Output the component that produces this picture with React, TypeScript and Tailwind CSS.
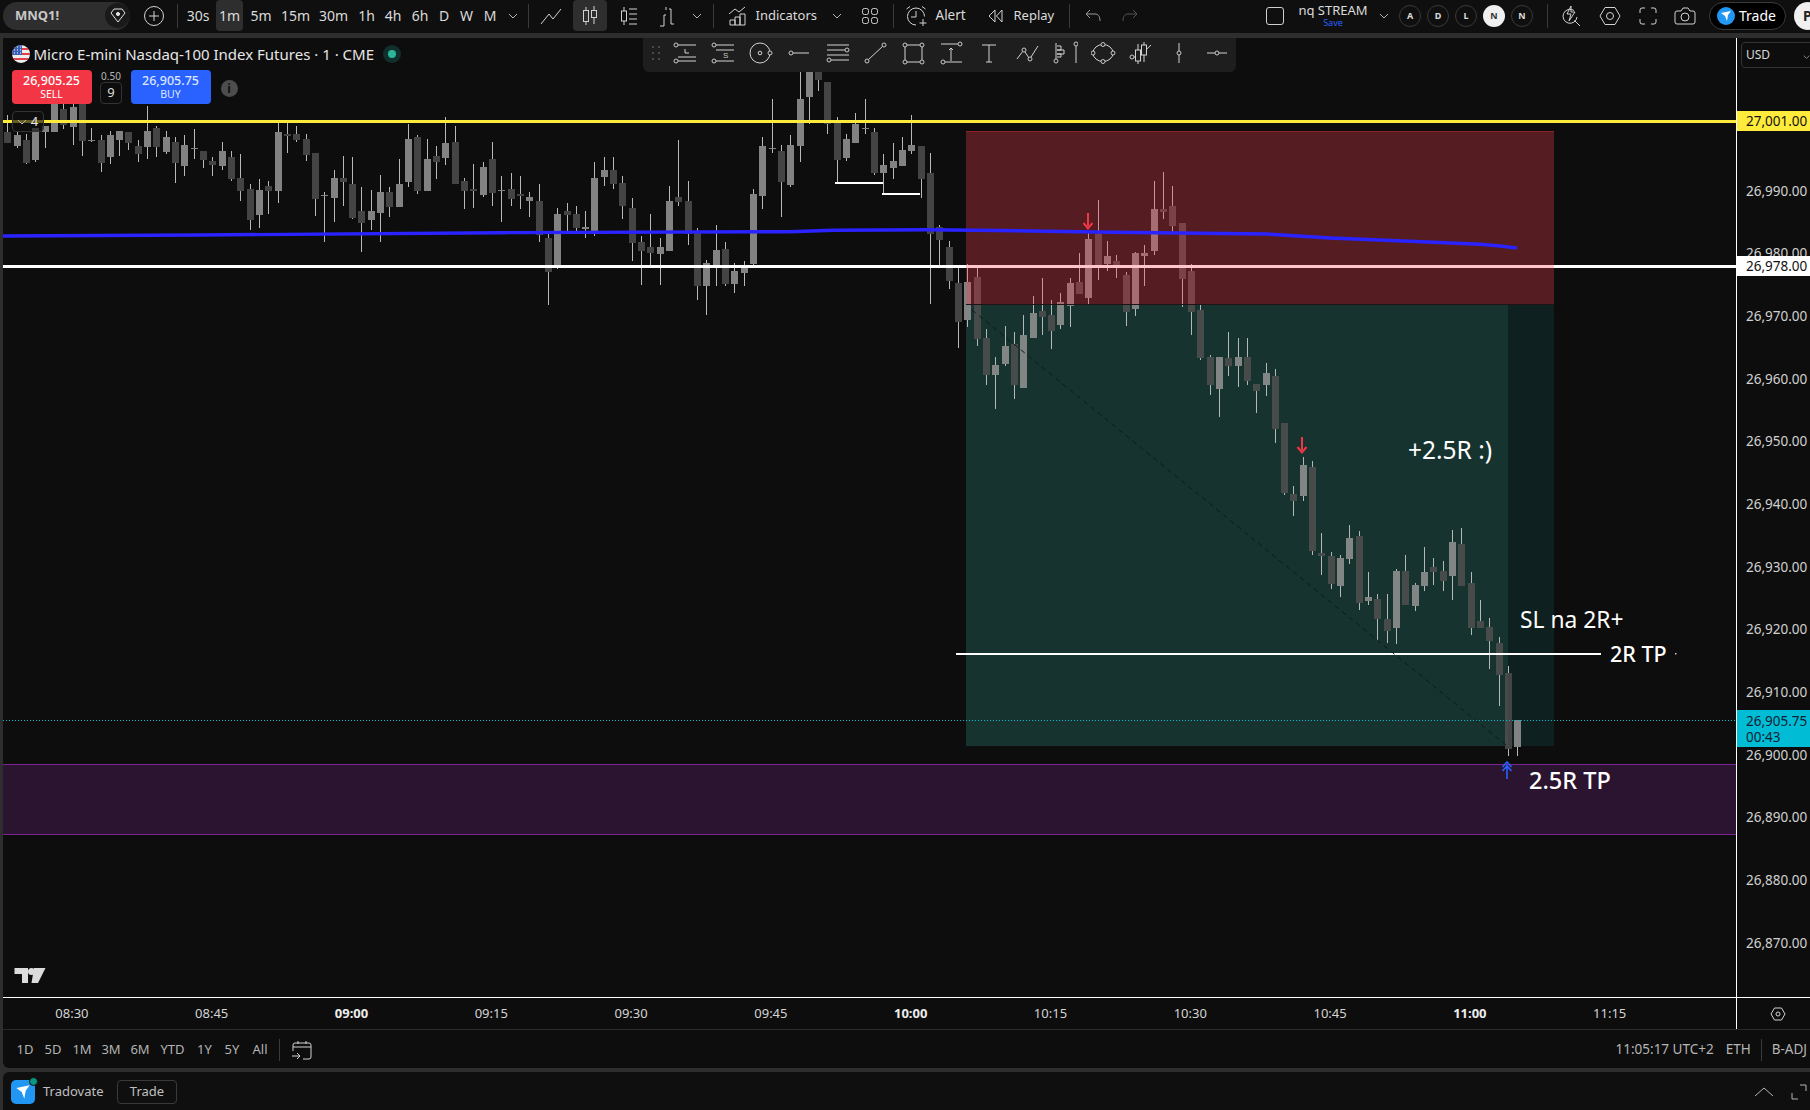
import React from "react";

type C = [number, number, number, number, number];
// wickTop, bodyTop, bodyBottom, wickBottom, light – read in 3x pixels from a base y
const S1: C[] = [[45,96,129,129,0],[96,105,138,144,1],[102,120,189,192,0],[84,84,180,186,1],[78,78,96,144,1],[-24,-24,96,96,1],[-30,27,75,87,0],[-15,21,81,135,1],[-24,-24,123,168,0],[84,120,123,126,1],[105,120,189,216,0],[93,105,171,192,1],[93,93,120,168,1],[96,96,129,150,0],[120,138,162,186,0],[18,93,141,177,1],[78,84,141,171,0],[93,111,156,162,1],[111,126,189,249,0],[105,135,198,228,1],[87,144,147,177,1],[153,153,180,204,0],[171,183,195,228,0],[126,153,198,210,1],[153,171,237,243,0],[162,234,273,303,0],[252,267,360,390,0],[237,270,345,384,1],[243,258,273,342,0],[63,96,273,309,1],[69,102,108,159,0],[78,102,120,126,0],[102,117,165,183,0],[159,159,297,348,0],[276,285,288,426,1],[210,234,294,366,1],[168,234,246,318,0],[171,252,354,357,0],[261,333,369,456,0],[270,333,360,390,1],[225,276,339,426,1],[261,276,321,351,0],[177,252,321,321,1],[72,117,246,261,1],[105,111,273,282,0],[117,177,273,273,1],[138,168,186,237,0],[51,129,174,195,1],[78,126,252,252,0],[234,243,273,327,0],[192,267,273,324,0],[186,201,285,291,1],[126,177,279,318,0]];
const S2: C[] = [[348,389,392,486,1],[339,387,417,438,0],[348,402,408,447,0],[396,411,423,471,1],[372,423,525,546,0],[513,534,636,735,0],[444,462,621,627,1],[429,453,465,519,0],[438,462,504,519,0],[453,501,507,534,1],[306,354,516,528,1],[291,330,351,378,1],[291,330,372,387,0],[348,369,438,477,0],[414,444,549,603,0],[528,546,573,675,0],[462,561,579,618,0],[534,561,582,675,1],[378,423,573,573,1],[240,411,426,438,0],[363,423,522,555,0],[504,513,678,720,0],[600,609,678,765,1],[495,570,615,678,1],[546,567,672,678,0],[609,633,672,699,1],[603,621,639,678,1],[387,402,612,618,1],[231,258,408,447,1],[117,264,267,279,1],[255,273,366,471,0],[225,255,375,381,1],[-20,117,258,306,1],[-20,-20,111,192,1],[-20,36,60,93,0],[66,66,192,222,0],[171,183,300,369,0],[222,237,294,303,1],[159,192,249,249,1],[117,204,207,222,1],[204,216,339,345,0],[282,315,339,402,1],[249,303,324,357,1],[231,270,318,318,1],[165,255,273,282,1],[258,258,357,414,0],[279,339,522,732,0],[495,501,540,618,0],[543,561,663,687,0],[618,669,786,864,0],[612,666,780,801,1],[624,651,837,858,0]];
const S3: C[] = [[597,624,735,765,0],[681,705,735,837,1],[588,648,702,708,1],[606,642,765,807,0],[555,615,774,774,1],[498,549,624,624,1],[444,543,561,615,0],[510,555,603,657,0],[489,516,585,597,1],[444,459,528,591,1],[369,456,492,492,0],[309,327,504,525,1],[210,312,414,450,0],[333,378,402,423,1],[375,393,405,444,0],[426,435,546,588,0],[366,369,537,558,1],[345,369,378,468,1],[153,237,363,375,1],[126,237,246,267,0],[168,228,288,309,0],[279,279,447,531,0],[402,423,546,615,0],[525,540,684,690,0],[675,681,765,795,0],[681,681,777,861,1],[606,684,708,738,0],[624,681,708,771,1],[624,681,753,765,0],[762,762,783,849,0],[699,729,765,798,1],[717,738,897,939,0]];
const S4: C[] = [[-21,-21,189,195,0],[168,192,213,258,0],[81,105,198,213,1],[93,111,363,375,0],[309,369,378,435,0],[366,378,462,477,0],[375,384,468,501,1],[285,324,387,402,1],[303,318,519,540,0],[426,501,513,525,1],[492,507,567,633,0],[492,567,603,639,0],[417,423,594,642,1],[375,423,525,525,0],[459,465,528,543,1],[351,426,468,483,1],[384,411,426,465,0],[393,423,453,483,0],[300,336,438,510,1],[294,342,468,468,0],[426,459,594,615,0],[510,573,594,594,0],[564,591,633,717,0],[621,639,735,828,0],[708,729,957,978,0],[870,870,951,978,1]];

const candles = [
  ...S1.map((c) => ({ c, b: 100 })),
  ...S2.map((c) => ({ c, b: 60 })),
  ...S3.map((c) => ({ c, b: 130 })),
  ...S4.map((c) => ({ c, b: 430 })),
];

function Candles() {
  return (
    <g shapeRendering="crispEdges">
      {candles.map(({ c, b }, i) => {
        const x = Math.round(7.33 + i * 9.32);
        const y = (v: number) => b + v / 3;
        return (
          <g key={i}>
            <rect x={x} y={y(c[0])} width={1} height={(c[3] - c[0]) / 3} fill="#b8b8b8" />
            <rect x={x - 3} y={y(c[1])} width={7} height={Math.max(1, (c[2] - c[1]) / 3)} fill={c[4] ? "#828282" : "#444444"} />
          </g>
        );
      })}
    </g>
  );
}

function Ic({ w = 24, h = 24, children, className }: { w?: number; h?: number; children: React.ReactNode; className?: string }) {
  return (
    <svg width={w} height={h} viewBox={`0 0 ${w} ${h}`} fill="none" stroke="#d2d2d2" strokeWidth={1} className={className}>
      {children}
    </svg>
  );
}

const Dot = ({ x, y }: { x: number; y: number }) => <circle cx={x} cy={y} r={2} fill="#1e1e1e" stroke="#c8c8c8" />;

const tools: React.ReactNode[] = [
  <><Dot x={3} y={4} /><path d="M5 4H23M5 20H23M5 16H23" /><path d="M12 8V12H16" /><Dot x={3} y={20} /></>,
  <><Dot x={3} y={4} /><path d="M5 4H23M5 9H23M5 20H23" /><text x={12} y={17} fontSize={8} fill="#c8c8c8" stroke="none" fontFamily="'Liberation Sans'">S</text><Dot x={3} y={20} /></>,
  <><circle cx={11} cy={12} r={10} /><circle cx={11} cy={12} r={1.8} /><Dot x={21} y={12} /></>,
  <><Dot x={4} y={12} /><path d="M6 12H22" /></>,
  <><path d="M2 4H24M2 9H20M2 14H24M6 19H24" /><Dot x={22} y={9} /><Dot x={4} y={19} /></>,
  <><Dot x={4} y={20} /><Dot x={21} y={4} /><path d="M5.5 18.5L19.5 5.5" /></>,
  <><path d="M4 6V19M6 4H19M21 6V19M6 21H19" /><Dot x={4} y={4} /><Dot x={21} y={4} /><Dot x={4} y={21} /><Dot x={21} y={21} /></>,
  <><path d="M2 3H19M6 21H23M12 7V20M10 9L12 7L14 9" /><Dot x={21} y={3} /><Dot x={4} y={21} /></>,
  <path d="M5 4H19M12 4V21M9 21H15" />,
  <><path d="M2 18L8 10M10 11L14 17M16 16L23 5" /><Dot x={9} y={9} /><Dot x={15} y={18} /></>,
  <><path d="M3 2V18M4 5H8V9H4M4 9H11V13H4M4 13H8V16H4M23 5V22" /><Dot x={3} y={20} /><Dot x={23} y={3} /></>,
  <><ellipse cx={12} cy={12} rx={10} ry={8.5} /><Dot x={12} y={3.5} /><Dot x={2} y={12} /><Dot x={22} y={12} /><Dot x={12} y={20.5} /></>,
  <><path d="M9 3V23M15 1V21M2 17C8 16 14 12 22 4" /><rect x={6.5} y={9} width={5} height={11} fill="#1e1e1e" /><rect x={12.5} y={4} width={5} height={10} fill="#1e1e1e" /><Dot x={3} y={16} /></>,
  <><path d="M12 2V22" /><Dot x={12} y={12} /></>,
  <><path d="M2 12H22" /><Dot x={12} y={12} /></>,
];

const sep = "w-px h-[24px] bg-[#3a3a3a] shrink-0";
const tfBtn = "flex items-center justify-center shrink-0 h-full";

function Chevron({ className }: { className?: string }) {
  return <svg width="10" height="6" viewBox="0 0 10 6" fill="none" stroke="#b5b5b5" className={className}><path d="M1 1L5 5L9 1" /></svg>;
}

function Header() {
  return (
    <div className="h-[33px] shrink-0 bg-[#0f0f0f] flex items-center text-[14px] text-[#dbdbdb] overflow-hidden pb-[2px]">
      <div className="ml-[3px] w-[127px] h-[28px] shrink-0 rounded-full bg-[#2e2e2e] flex items-center justify-between">
        <span className="ml-[12px] font-bold text-[13px] text-[#c8c8c8]">MNQ1!</span>
        <span className="w-[25px] h-[25px] rounded-full bg-[#1a1a1a] flex items-center justify-center">
          <svg width="16" height="15" viewBox="0 0 16 15" fill="none" stroke="#e0e0e0"><path d="M4 1H12L15 5L8 14L1 5Z" /><circle cx="8" cy="6" r="1.6" fill="#e0e0e0" /></svg>
        </span>
      </div>
      <div className="ml-[9.5px] w-[28px] flex justify-center shrink-0">
        <Ic w={20} h={20}><circle cx={10} cy={10} r={9.5} /><path d="M10 5V15M5 10H15" /></Ic>
      </div>
      <div className={`ml-[9px] ${sep}`} />
      <div className="ml-[2.5px] flex h-full items-center shrink-0 text-[14px]">
        <div className={`w-[36px] ${tfBtn}`}>30s</div>
        <div className={`w-[27px] ${tfBtn} bg-[#2e2e2e] rounded-[4px] h-[32px]`}>1m</div>
        <div className={`w-[36px] ${tfBtn}`}>5m</div>
        <div className={`w-[33px] ${tfBtn}`}>15m</div>
        <div className={`w-[43px] ${tfBtn}`}>30m</div>
        <div className={`w-[23px] ${tfBtn}`}>1h</div>
        <div className={`w-[30px] ${tfBtn}`}>4h</div>
        <div className={`w-[24px] ${tfBtn}`}>6h</div>
        <div className={`w-[24px] ${tfBtn}`}>D</div>
        <div className={`w-[21px] ${tfBtn}`}>W</div>
        <div className={`w-[26px] ${tfBtn}`}>M</div>
        <div className={`w-[19px] ${tfBtn}`}><Chevron /></div>
      </div>
      <div className={`ml-[6px] ${sep}`} />
      <div className={`w-[44px] ${tfBtn}`}>
        <Ic w={22} h={18}><path d="M1 17L9 7L13 12L21 2" /></Ic>
      </div>
      <div className={`w-[34px] h-[32px] ${tfBtn} bg-[#2e2e2e] rounded-[4px]`}>
        <Ic w={20} h={22}><path d="M6 2V20M14 1V19" /><rect x={3.5} y={5.5} width={5} height={11} fill="#2e2e2e" /><rect x={11.5} y={5.5} width={5} height={7} fill="#2e2e2e" /></Ic>
      </div>
      <div className={`w-[43px] ${tfBtn}`}>
        <Ic w={20} h={22}><path d="M5 2V20" /><rect x={2.5} y={6} width={5} height={10} fill="#0f0f0f" /><path d="M10 4H18M10 9H18M10 14H18M10 19H18" /></Ic>
      </div>
      <div className={`w-[34px] ${tfBtn}`}>
        <Ic w={20} h={22}><path d="M3 21H7V10H9M9 5V2M14 19V4H12M14 19H17" /></Ic>
      </div>
      <div className={`w-[26px] ${tfBtn}`}><Chevron /></div>
      <div className={`ml-[3px] ${sep}`} />
      <div className="ml-[12.5px] w-[22px] shrink-0 flex justify-center">
        <Ic w={20} h={20}><path d="M1 8L7 3L11 6L17 1" /><path d="M2 19V14H7V19ZM7 19V11H12V19ZM12 19V8H17V19Z" /></Ic>
      </div>
      <div className="ml-[7px] w-[62px] shrink-0 text-[13px] whitespace-nowrap">Indicators</div>
      <Chevron className="ml-[14px] w-[10px] shrink-0 mr-[5px]" />
      <div className="w-[46.5px] shrink-0 flex justify-center">
        <Ic w={18} h={18}><rect x={1.5} y={1.5} width={6} height={6} rx={2} /><rect x={10.5} y={1.5} width={6} height={6} rx={2} /><rect x={1.5} y={10.5} width={6} height={6} rx={2} /><rect x={10.5} y={10.5} width={6} height={6} rx={2} /></Ic>
      </div>
      <div className={sep} />
      <div className="ml-[11px] w-[22px] shrink-0 flex justify-center">
        <Ic w={22} h={22}><path d="M11 20A8.5 8.5 0 1 1 19.5 11.5M1.5 4L5 1.5M17 1.5L20.5 4M11 6V12H6M18 14V21M14.5 18H21.5" /></Ic>
      </div>
      <div className="ml-[8.5px] w-[31px] shrink-0 text-[13.5px]">Alert</div>
      <div className="ml-[19px] w-[20px] shrink-0 flex justify-center">
        <Ic w={16} h={14}><path d="M7 1L1 7L7 13ZM14 1L8.5 7L14 13Z" /></Ic>
      </div>
      <div className="ml-[8px] w-[42px] shrink-0 text-[13px]">Replay</div>
      <div className={`ml-[13px] ${sep}`} />
      <div className="ml-[13px] w-[20px] shrink-0 flex justify-center">
        <Ic w={16} h={14}><path d="M5 1L1 5L5 9M1 5H10C13 5 15 7 15 12" stroke="#9a9a9a" /></Ic>
      </div>
      <div className="ml-[17.5px] w-[20px] shrink-0 flex justify-center">
        <Ic w={16} h={14}><path d="M11 1L15 5L11 9M15 5H6C3 5 1 7 1 12" stroke="#555" /></Ic>
      </div>

      <div className="ml-auto flex items-center shrink-0 w-[544.5px]">
        <div className="w-[18.5px] h-[18px] border border-[#cfcfcf] rounded-[3px] shrink-0" />
        <div className="ml-[14px] w-[70px] shrink-0 flex flex-col items-center leading-none">
          <span className="text-[13px] whitespace-nowrap leading-[14px]">nq STREAM</span>
          <span className="text-[9px] text-[#2962ff] leading-[11px]">Save</span>
        </div>
        <Chevron className="ml-[11px] shrink-0 mr-[1px]" />
        <div className="ml-[9px] w-[22px] h-[22px] rounded-full border border-[#3a3a3a] text-[9px] font-bold flex items-center justify-center shrink-0">A</div>
        <div className="ml-[6px] w-[22px] h-[22px] rounded-full border border-[#3a3a3a] text-[9px] font-bold flex items-center justify-center shrink-0">D</div>
        <div className="ml-[6px] w-[22px] h-[22px] rounded-full border border-[#3a3a3a] text-[9px] font-bold flex items-center justify-center shrink-0">L</div>
        <div className="ml-[6px] w-[22px] h-[22px] rounded-full bg-[#f0f0f0] text-[#333] text-[9px] font-bold flex items-center justify-center shrink-0">N</div>
        <div className="ml-[6px] w-[22px] h-[22px] rounded-full border border-[#3a3a3a] text-[9px] font-bold flex items-center justify-center shrink-0">N</div>
        <div className={`ml-[14px] ${sep}`} />
        <div className="ml-[12px] w-[22px] flex justify-center shrink-0">
          <Ic w={22} h={22}><path d="M14 5.5A7 7 0 1 0 17 12M14.5 15.5L20 21M11 1L7 9H11L9 16L15 7H11Z" /></Ic>
        </div>
        <div className="ml-[17px] w-[22px] flex justify-center shrink-0">
          <Ic w={22} h={22}><path d="M6 2.5H16L21 11L16 19.5H6L1 11Z" /><circle cx={11} cy={11} r={3.5} /></Ic>
        </div>
        <div className="ml-[16px] w-[22px] flex justify-center shrink-0">
          <Ic w={18} h={18}><path d="M1 6V3A2 2 0 0 1 3 1H6M12 1H15A2 2 0 0 1 17 3V6M17 12V15A2 2 0 0 1 15 17H12M6 17H3A2 2 0 0 1 1 15V12" /></Ic>
        </div>
        <div className="ml-[15px] w-[22px] flex justify-center shrink-0">
          <Ic w={22} h={18}><path d="M3 4H7L9 1H14L16 4H19A2 2 0 0 1 21 6V15A2 2 0 0 1 19 17H3A2 2 0 0 1 1 15V6A2 2 0 0 1 3 4Z" /><circle cx={11} cy={10} r={4} /></Ic>
        </div>
        <div className="ml-[13px] w-[77px] h-[28px] rounded-full bg-black border border-[#3a3a3a] flex items-center shrink-0">
          <span className="ml-[7px] w-[18px] h-[18px] rounded-full bg-[#2196f3] flex items-center justify-center">
            <svg width="12" height="12" viewBox="0 0 12 12" fill="#fff"><path d="M1 3L11 1L8 5L7 11L5 6Z" /></svg>
          </span>
          <span className="ml-[4px] text-[14px] text-white">Trade</span>
        </div>
        <div className="ml-[8px] w-[28px] h-[28px] rounded-full bg-[#f0f0f0] text-[#222] text-[14px] font-bold flex items-center pl-[9px] shrink-0">P</div>
      </div>
    </div>
  );
}

function Toolbar() {
  return (
    <div className="absolute left-[639.5px] top-[-4.5px] w-[593px] h-[38px] rounded-[6px] bg-[#1e1e1e] flex items-center">
      <div className="ml-[9px] w-[8px] shrink-0 grid grid-cols-2 gap-x-[4px] gap-y-[4px]">
        {[0, 1, 2, 3, 4, 5].map((i) => <span key={i} className="w-[2px] h-[2px] bg-[#4a4a4a]" />)}
      </div>
      <div className="ml-[7px] flex items-center">
        {tools.map((t, i) => (
          <div key={i} className="w-[38px] flex justify-center shrink-0"><Ic w={25} h={24}>{t}</Ic></div>
        ))}
      </div>
    </div>
  );
}

function Legend() {
  return (
    <div className="absolute left-[8.5px] top-[5px] flex flex-col items-start">
      <div className="flex items-center h-[22px]">
        <svg width="18" height="18" viewBox="0 0 18 18" className="shrink-0">
          <defs><clipPath id="fl"><circle cx="9" cy="9" r="9" /></clipPath></defs>
          <g clipPath="url(#fl)">
            <rect width="18" height="18" fill="#eee" />
            <path d="M0 4H18M0 9H18M0 14H18" stroke="#e0404a" strokeWidth="2.2" />
            <rect width="10" height="10" fill="#3b5fb5" />
            <path d="M2 2H3M5 2H6M8 2H9M2 5H3M5 5H6M8 5H9M2 8H3M5 8H6M8 8H9" stroke="#fff" />
          </g>
        </svg>
        <span className="ml-[4px] text-[15px] text-[#e6e6e6] whitespace-nowrap">Micro E-mini Nasdaq-100 Index Futures · 1 · CME</span>
        <span className="ml-[9px] w-[18px] h-[18px] rounded-full bg-[#11302b] flex items-center justify-center">
          <span className="w-[8px] h-[8px] rounded-full bg-[#2bb79a]" />
        </span>
      </div>
      <div className="mt-[5px] flex items-end h-[34px]">
        <div className="w-[80px] h-[34px] rounded-[4px] bg-[#f23645] text-white flex flex-col items-center justify-center leading-none">
          <span className="text-[12.5px] font-medium leading-[15px]">26,905.25</span>
          <span className="text-[10.5px] leading-[13px]">SELL</span>
        </div>
        <div className="ml-[8.5px] w-[22px] flex flex-col items-center">
          <span className="text-[10px] text-[#b5b5b5] leading-[12px]">0.50</span>
          <span className="w-[22px] h-[22px] rounded-[4px] border border-[#333] text-[13px] text-[#dbdbdb] flex items-center justify-center">9</span>
        </div>
        <div className="ml-[8.5px] w-[80px] h-[34px] rounded-[4px] bg-[#2962ff] text-[#dce6ff] flex flex-col items-center justify-center leading-none">
          <span className="text-[12.5px] font-medium leading-[15px]">26,905.75</span>
          <span className="text-[10.5px] leading-[13px]">BUY</span>
        </div>
        <div className="ml-[10px] mb-[7px] w-[17px] h-[17px] rounded-full bg-[#4d4d4d] text-[#111] text-[12px] font-bold flex items-center justify-center">i</div>
      </div>
      <div className="mt-[7px] w-[32px] h-[21px] rounded-[4px] border border-[#333] bg-[rgba(15,15,15,0.65)] flex items-center justify-center gap-[4px] text-[13px] text-[#e6e6e6]">
        <Chevron />
        <span>4</span>
      </div>
    </div>
  );
}

function ChartSvg() {
  const blue = "3,236 200,235 500,232.7 790,231.7 833,230.3 927,229.7 1000,230.5 1094,232 1266,234 1330,238 1404,241 1480,244.3 1500,246 1517,248";
  return (
    <svg className="absolute inset-0 w-full h-full" viewBox="3 38 1733 959" preserveAspectRatio="none">
      <g shapeRendering="crispEdges">
        <rect x={966} y={305} width={588} height={441} fill="rgb(33,203,193)" fillOpacity={0.1} />
        <rect x={966} y={305} width={542} height={441} fill="rgb(49,165,153)" fillOpacity={0.08} />
      </g>
      <Candles />
      <g shapeRendering="crispEdges">
        <rect x={966} y={305} width={542} height={441} fill="rgb(120,200,190)" fillOpacity={0.06} />
        <rect x={3} y={120} width={1733} height={3} fill="#ffeb3b" />
        <rect x={3} y={265} width={1733} height={3} fill="#ffffff" />
        <rect x={835} y={182} width={48} height={2} fill="#fff" />
        <rect x={882} y={193} width={38} height={2} fill="#fff" />
        <rect x={966} y={131} width={588} height={173} fill="rgb(253,66,83)" fillOpacity={0.3} />
        <rect x={966} y={131} width={588} height={1} fill="#8c2026" />
        <rect x={966} y={304} width={588} height={1} fill="#1e1416" />
        <rect x={3} y={764} width={1733} height={70} fill="#2a1430" />
        <rect x={3} y={764} width={1733} height={1} fill="#7b2296" />
        <rect x={3} y={834} width={1733} height={1} fill="#7b2296" />
        <rect x={956} y={653} width={645} height={2} fill="#fff" />
      </g>
      <path d="M972 310L1506 745" stroke="#0d1b1a" strokeWidth={1} strokeDasharray="5 4" />
      <path d="M3 720.5H1736" stroke="#00bcd4" strokeWidth={1} strokeDasharray="1 2" />
      <polyline points={blue} fill="none" stroke="#2a22ff" strokeWidth={3.4} />
      <path d="M1088 213V226M1083.5 223L1088 228.5L1092.5 223" fill="none" stroke="#f23645" strokeWidth={2} />
      <path d="M1302 437V450M1297.5 447L1302 452.5L1306.5 447" fill="none" stroke="#f23645" strokeWidth={2} />
      <path d="M1507 765V779M1502.5 767L1507 762L1511.5 767M1502.5 771L1507 766L1511.5 771" fill="none" stroke="#2962ff" strokeWidth={1.6} />
      <rect x={1675} y={653} width={1.5} height={1.5} fill="#ccc" />
      <path d="M14.5 968H28V983H22V974H14.5ZM34 968H45.5L38 983H31.5Z" fill="#dcdcdc" />
      <circle cx={31.5} cy={971.5} r={3.5} fill="#dcdcdc" />
    </svg>
  );
}

const priceLabels = ["26,990.00","26,980.00","26,970.00","26,960.00","26,950.00","26,940.00","26,930.00","26,920.00","26,910.00","26,900.00","26,890.00","26,880.00","26,870.00"];
const times: [string, boolean][] = [["08:30",false],["08:45",false],["09:00",true],["09:15",false],["09:30",false],["09:45",false],["10:00",true],["10:15",false],["10:30",false],["10:45",false],["11:00",true],["11:15",false]];

function PriceAxis() {
  return (
    <div className="relative w-[74px] shrink-0 border-l border-white bg-[#0d0d0d] overflow-hidden text-[13.5px] text-[#d1d1d1]">
      <div className="flex flex-col pt-[121.4px] pl-[9px]">
        {priceLabels.map((p) => (
          <div key={p} className="h-[62.7px] flex items-center whitespace-nowrap">{p}</div>
        ))}
      </div>
      <div className="absolute left-[4px] top-[4px] w-[80px] h-[26px] rounded-[4px] border border-[#333] bg-[#0d0d0d] flex items-center pl-[4px] text-[12px] text-[#dbdbdb]">USD
        <Chevron className="absolute left-[61px] top-[11px] w-[7px]" />
      </div>
      <div className="absolute left-0 right-0 top-[73px] h-[20px] bg-[#ffeb3b] text-[#111] flex items-center pl-[9px]">27,001.00</div>
      <div className="absolute left-0 right-0 top-[218px] h-[20px] bg-white text-[#111] flex items-center pl-[9px]">26,978.00</div>
      <div className="absolute left-0 right-0 top-[672px] h-[37px] bg-[#00bcd4] text-[#123] flex flex-col justify-center pl-[9px] leading-[16px]">
        <span>26,905.75</span>
        <span>00:43</span>
      </div>
    </div>
  );
}

export default function App() {
  return (
    <div className="w-[1810px] h-[1110px] overflow-hidden bg-[#2e2e2e] flex flex-col" style={{ fontFamily: "'Noto Sans','Liberation Sans',sans-serif" }}>
      <Header />
      <div className="mt-[5px] ml-[3px] flex-1 min-h-0 flex flex-col bg-[#0d0d0d] rounded-bl-[6px] overflow-hidden">
        <div className="flex h-[959px] shrink-0">
          <div className="relative flex-1 min-w-0 bg-[#0d0d0d]">
            <ChartSvg />
            <Legend />
            <Toolbar />
            <div className="absolute left-[1405px] top-[398px] text-[24.5px] leading-[28px] text-white whitespace-nowrap">+2.5R :)</div>
            <div className="absolute left-[1517px] top-[568px] text-[22.8px] leading-[28px] text-white whitespace-nowrap">SL na 2R+</div>
            <div className="absolute left-[1607px] top-[602px] text-[21.5px] leading-[28px] text-white font-medium whitespace-nowrap">2R TP</div>
            <div className="absolute left-[1526px] top-[728px] text-[23.5px] leading-[28px] text-white font-medium whitespace-nowrap">2.5R TP</div>
          </div>
          <PriceAxis />
        </div>
        <div className="h-[32px] shrink-0 flex border-t border-white border-b-0 text-[13px] text-[#d4d4d4]">
          <div className="flex-1 min-w-0 flex items-center -ml-[1px] overflow-hidden">
            {times.map(([t, b]) => (
              <div key={t} className={b ? "w-[139.8px] shrink-0 text-center font-bold text-[#ededed]" : "w-[139.8px] shrink-0 text-center"}>{t}</div>
            ))}
          </div>
          <div className="w-[74px] shrink-0 border-l border-white flex items-center justify-center pl-[8px]">
            <Ic w={16} h={14}><path d="M4.5 1H11.5L15 7L11.5 13H4.5L1 7Z" /><circle cx={8} cy={7} r={2} /></Ic>
          </div>
        </div>
        <div className="h-[39px] shrink-0 border-t border-[#2a2a2a] flex items-center text-[13px] text-[#b4b4b4] pt-[1px]">
          <div className="ml-[8px] w-[28px] text-center shrink-0">1D</div>
          <div className="w-[28px] text-center shrink-0">5D</div>
          <div className="w-[30px] text-center shrink-0">1M</div>
          <div className="w-[28px] text-center shrink-0">3M</div>
          <div className="w-[30px] text-center shrink-0">6M</div>
          <div className="w-[35px] text-center shrink-0">YTD</div>
          <div className="w-[29px] text-center shrink-0">1Y</div>
          <div className="w-[26px] text-center shrink-0">5Y</div>
          <div className="w-[30px] text-center shrink-0">All</div>
          <div className="ml-[4px] w-px h-[22px] bg-[#3a3a3a] shrink-0" />
          <div className="ml-[11px] w-[22px] flex justify-center shrink-0">
            <Ic w={20} h={20}><path d="M1 11V5A2 2 0 0 1 3 3H17A2 2 0 0 1 19 5V17A2 2 0 0 1 17 19H11M1 7H19M6 1V4M14 1V4M0 16H8M5 13L8 16L5 19" /></Ic>
          </div>
          <div className="ml-auto flex items-center pr-[3px] text-[13.5px] text-[#b4b4b4]">
            <span className="whitespace-nowrap">11:05:17 UTC+2</span>
            <span className="ml-[12px]">ETH</span>
            <span className="ml-[10px] w-px h-[22px] bg-[#3a3a3a]" />
            <span className="ml-[10px]">B-ADJ</span>
          </div>
        </div>
      </div>
      <div className="mt-[4px] h-[38px] shrink-0 ml-[3px] bg-[#0f0f0f] rounded-tl-[6px] flex items-center text-[13px] text-[#c0c0c0] pt-[1px]">
        <div className="relative ml-[8px] w-[24px] h-[24px] rounded-[5px] bg-[#2196f3] flex items-center justify-center shrink-0">
          <svg width="16" height="16" viewBox="0 0 12 12" fill="#fff"><path d="M1 3L11 1L8 5L7 11L5 6Z" /></svg>
          <span className="absolute -right-[3px] -top-[3px] w-[9px] h-[9px] rounded-full bg-[#089981] border border-[#0f0f0f]" />
        </div>
        <span className="ml-[8px] w-[62px] shrink-0">Tradovate</span>
        <div className="ml-[12px] w-[60px] h-[24px] rounded-[4px] border border-[#3a3a3a] flex items-center justify-center shrink-0">Trade</div>
        <div className="ml-auto flex items-center">
          <svg width="20" height="10" viewBox="0 0 20 10" fill="none" stroke="#b5b5b5"><path d="M1 9L10 1L19 9" /></svg>
          <svg width="16" height="16" viewBox="0 0 16 16" fill="none" stroke="#b5b5b5" className="ml-[17px] mr-[3px]"><path d="M9 1H15V7M1 9V15H7" /></svg>
        </div>
      </div>
    </div>
  );
}
